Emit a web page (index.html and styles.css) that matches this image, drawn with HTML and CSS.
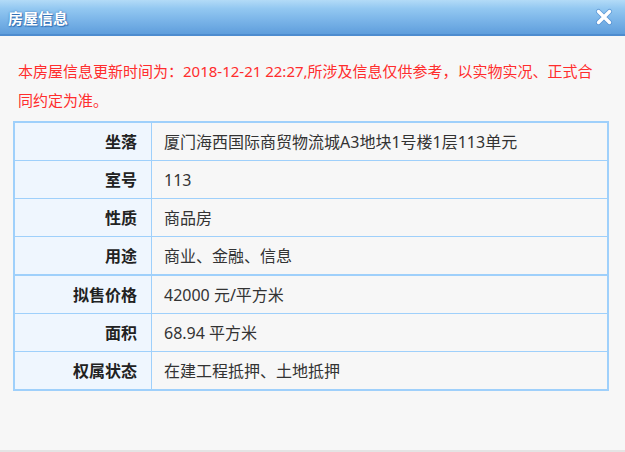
FILE: index.html
```html
<!DOCTYPE html>
<html lang="zh-CN">
<head>
<meta charset="utf-8">
<title>房屋信息</title>
<link rel="stylesheet" href="styles.css">
</head>
<body>
<div class="dialog">
  <div class="titlebar">
    <span class="title">房屋信息</span>
    <span class="close" aria-label="关闭">
      <svg width="18" height="18" viewBox="0 0 18 18">
        <path d="M3.5 3.5 L14.5 14.5 M14.5 3.5 L3.5 14.5" stroke="#3f7cc4" stroke-width="5" stroke-linecap="round" fill="none" opacity="0.55"/>
        <path d="M3.5 3.5 L14.5 14.5 M14.5 3.5 L3.5 14.5" stroke="#ffffff" stroke-width="3.4" stroke-linecap="round" fill="none"/>
      </svg>
    </span>
  </div>
  <div class="content">
    <p class="notice">本房屋信息更新时间为：2018-12-21 22:27,所涉及信息仅供参考，以实物实况、正式合同约定为准。</p>
    <table class="info">
      <tbody>
        <tr><th>坐落</th><td>厦门海西国际商贸物流城A3地块1号楼1层113单元</td></tr>
        <tr><th>室号</th><td>113</td></tr>
        <tr><th>性质</th><td>商品房</td></tr>
        <tr class="group-end"><th>用途</th><td>商业、金融、信息</td></tr>
      </tbody>
      <tbody>
        <tr><th>拟售价格</th><td>42000 元/平方米</td></tr>
        <tr><th>面积</th><td>68.94 平方米</td></tr>
        <tr><th>权属状态</th><td>在建工程抵押、土地抵押</td></tr>
      </tbody>
    </table>
  </div>
</div>
</body>
</html>
```
FILE: styles.css
```css
html, body {
  margin: 0;
  padding: 0;
}
body {
  width: 625px;
  height: 452px;
  overflow: hidden;
  background: #f7f7f7;
  font-family: "Noto Sans", "Noto Sans CJK SC", sans-serif;
  font-size: 16px;
  color: #333;
}
.dialog {
  height: 452px;
  box-sizing: border-box;
  border-bottom: 2px solid #e4e4e4;
  display: flex;
  flex-direction: column;
}
.titlebar {
  height: 34px;
  border-bottom: 2px solid #4d8ccf;
  background: linear-gradient(to bottom, #b3dbf7 0%, #93c8f1 25%, #7ab4e8 60%, #5f9edc 100%);
  display: flex;
  align-items: center;
  justify-content: space-between;
  padding: 0 12px 0 8px;
}
.title {
  color: #fff;
  font-weight: bold;
  font-size: 15px;
  text-shadow: 0 0 2px #2f6fb5, 1px 1px 1px #2f6fb5;
}
.close {
  display: flex;
  width: 18px;
  height: 18px;
}
.content {
  padding: 21px 13px 0 13px;
}
.notice {
  margin: 0 0 6px 0;
  padding: 0 5px;
  color: #ff2d2d;
  font-size: 15px;
  line-height: 29px;
}
.info {
  width: 596px;
  border-collapse: collapse;
  border: 2px solid #9fd0fb;
}
.info th, .info td {
  height: 37px;
  padding: 0;
  border: 1px solid #9fd0fb;
  font-size: 16px;
  line-height: 20px;
}
.info th {
  width: 122px;
  padding-right: 14px;
  text-align: right;
  background: #eff6fe;
  color: #222;
  font-weight: bold;
}
.info td {
  padding-left: 12px;
  text-align: left;
  color: #333;
}
.info tr.group-end th, .info tr.group-end td {
  border-bottom: 2px solid #9fd0fb;
}
```
